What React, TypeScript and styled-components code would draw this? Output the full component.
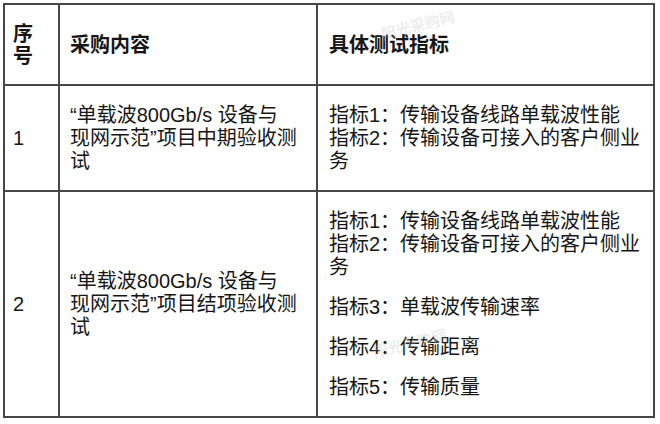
import React from "react";
import styled, { createGlobalStyle } from "styled-components";

const GlobalStyle = createGlobalStyle`
  html, body {
    margin: 0;
    background: #fff;
  }
  body {
    font-family: "Liberation Sans", "Noto Sans CJK SC", sans-serif;
    color: #161616;
  }
`;

type Col = "no" | "content" | "spec";

const pads: Record<Col, string> = {
  no: "0 8px 0 8px",
  content: "0 12px 0 10px",
  spec: "0 10px 0 11px",
};

const Page = styled.div`
  position: relative;
  width: 660px;
  height: 424px;
  padding: 3px 0 0 3px;
  box-sizing: border-box;
  overflow: hidden;
`;

const Grid = styled.div`
  display: grid;
  grid-template-columns: 55px 258px 337px;
  grid-template-rows: 81px 106px 226px;
  width: max-content;
  border-top: 2px solid #474747;
  border-left: 2px solid #474747;
`;

const Cell = styled.div<{ $col: Col; $head?: boolean }>`
  display: flex;
  align-items: center;
  box-sizing: border-box;
  padding: ${({ $col }) => pads[$col]};
  border-right: 2px solid #474747;
  border-bottom: 2px solid #474747;
  font-size: 20px;
  line-height: ${({ $head }) => ($head ? "22px" : "23px")};
  font-weight: ${({ $head }) => ($head ? 700 : 400)};
`;

const Para = styled.p`
  margin: 0;
  & + & {
    margin-top: 17px;
  }
`;

const Watermark = styled.span<{ $x: number; $y: number }>`
  position: absolute;
  left: ${({ $x }) => $x}px;
  top: ${({ $y }) => $y}px;
  font-size: 15px;
  font-weight: 700;
  color: rgba(190, 190, 190, 0.28);
  transform: rotate(-14deg);
  white-space: nowrap;
  pointer-events: none;
`;

type Row = { no: string; content: React.ReactNode; specs: string[] };

const rows: Row[] = [
  {
    no: "1",
    content: (
      <>
        “单载波800Gb/s 设备与
        <br />
        现网示范”项目中期验收测试
      </>
    ),
    specs: ["指标1：传输设备线路单载波性能\n指标2：传输设备可接入的客户侧业务"],
  },
  {
    no: "2",
    content: (
      <>
        “单载波800Gb/s 设备与
        <br />
        现网示范”项目结项验收测试
      </>
    ),
    specs: [
      "指标1：传输设备线路单载波性能\n指标2：传输设备可接入的客户侧业务",
      "指标3：单载波传输速率",
      "指标4：传输距离",
      "指标5：传输质量",
    ],
  },
];

const Lines = ({ text }: { text: string }) => (
  <>
    {text.split("\n").map((line, i) => (
      <React.Fragment key={i}>
        {i > 0 && <br />}
        {line}
      </React.Fragment>
    ))}
  </>
);

export default function App() {
  return (
    <Page>
      <GlobalStyle />
      <Grid>
        <Cell $col="no" $head>
          序号
        </Cell>
        <Cell $col="content" $head>
          采购内容
        </Cell>
        <Cell $col="spec" $head>
          具体测试指标
        </Cell>

        {rows.map((row) => (
          <React.Fragment key={row.no}>
            <Cell $col="no">{row.no}</Cell>
            <Cell $col="content">
              <div>{row.content}</div>
            </Cell>
            <Cell $col="spec">
              <div>
                {row.specs.map((s, i) => (
                  <Para key={i}>
                    <Lines text={s} />
                  </Para>
                ))}
              </div>
            </Cell>
          </React.Fragment>
        ))}
      </Grid>
      <Watermark $x={380} $y={14}>
        阳光采购网
      </Watermark>
      <Watermark $x={372} $y={332}>
        阳光采购网
      </Watermark>
    </Page>
  );
}
